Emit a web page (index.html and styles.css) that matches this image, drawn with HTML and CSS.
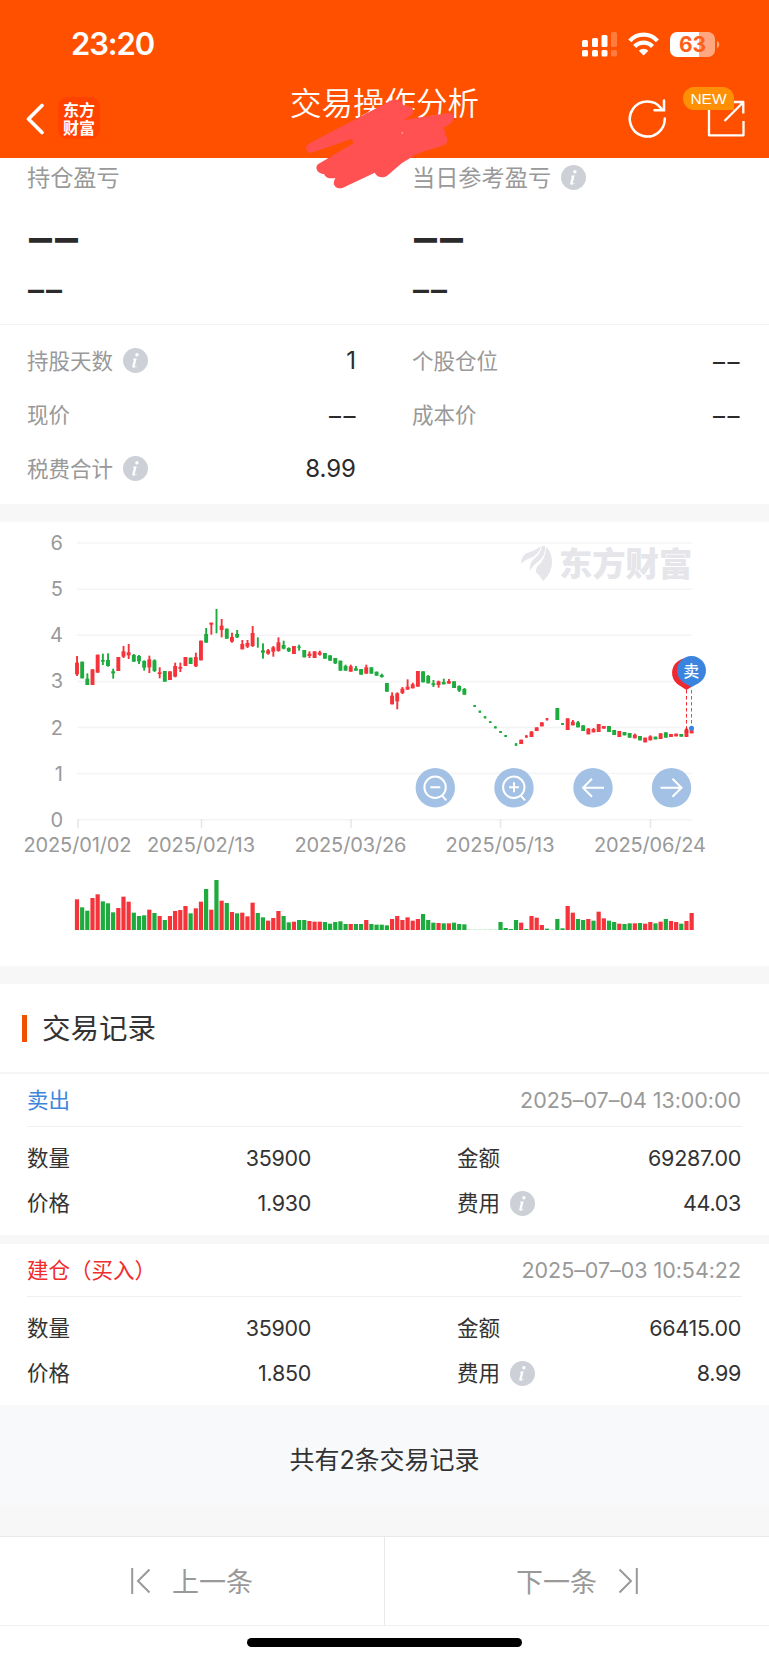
FILE: index.html
```html
<!DOCTYPE html>
<html lang="zh-CN">
<head>
<meta charset="utf-8">
<title>交易操作分析</title>
<link rel="stylesheet" href="styles.css">
</head>
<body>
<svg class="defs" width="0" height="0">
  <symbol id="info" viewBox="0 0 25 25"><circle cx="12.5" cy="12.5" r="12.5" fill="#cdd0d6"/><circle cx="13.9" cy="6.7" r="1.7" fill="#fff"/><path d="M10 10.8l3.7-.5-2 7.6c-.2.9.4.9 1.8-.2l.4.5c-1.700 1.700-5.200 2.300-4.600-.3l1.600-6.100-1-.4z" fill="#fff"/></symbol>
</svg>
<header class="header">
  <div class="status">
    <span class="clock">23:20</span>
    <svg class="status-icons" width="140" height="30" viewBox="0 0 140 30" fill="#fff">
      <rect x="1" y="11" width="6" height="7" rx="1.500"/><rect x="11" y="9" width="6" height="9" rx="1.500"/><rect x="20.500" y="6" width="6" height="12" rx="1.500"/><rect x="30" y="3" width="6" height="15" rx="1.500" opacity=".25"/>
      <rect x="1" y="21" width="6" height="6.500" rx="1.500"/><rect x="11" y="21" width="6" height="6.500" rx="1.500"/><rect x="20.500" y="21" width="6" height="6.500" rx="1.500"/><rect x="30" y="21" width="6" height="6.500" rx="1.500" opacity=".25"/>
      <g fill="none" stroke="#fff" stroke-width="4.200"><path d="M48.800 11.800a18.500 18.500 0 0 1 27.600 0"/><path d="M53.700 17.500a12 12 0 0 1 17.800 0"/></g>
      <path d="M62.600 26.600l-4.800-4.800a6.800 6.800 0 0 1 9.600 0z"/>
      <path d="M96 3h22v25H96a7 7 0 0 1-7-7V10a7 7 0 0 1 7-7z"/>
      <path d="M118 3h9a7 7 0 0 1 7 7v11a7 7 0 0 1-7 7h-9z" opacity=".5"/>
      <path d="M136 12c3 1 3 6 0 7z" opacity=".5"/>
      <text x="111.500" y="23" class="battery" text-anchor="middle">63</text>
    </svg>
  </div>
  <nav class="nav">
    <div class="nav-left">
      <svg width="20" height="32" viewBox="0 0 20 32"><path d="M17 2.500L3.500 16 17 29.500" fill="none" stroke="#fff" stroke-width="3.600" stroke-linecap="round" stroke-linejoin="round"/></svg>
      <div class="logo">东方财富</div>
    </div>
    <h1 class="title">交易操作分析</h1>
    <div class="nav-right">
      <svg class="refresh" width="40" height="40" viewBox="0 0 40 40" fill="none" stroke="#fff" stroke-width="2.500" stroke-linecap="round"><path d="M37.800 20.600A17.500 17.500 0 1 1 34.300 10.500M27.500 12.300H37V2.500"/></svg>
      <div class="share">
        <svg width="38" height="38" viewBox="0 0 38 38" fill="none" stroke="#fff" stroke-width="2.300" stroke-linejoin="round"><path d="M2 9v26.300h34.500V21M17.500 21L36 2.500M27 2h9.300v11.500"/></svg>
        <span class="badge">NEW</span>
      </div>
    </div>
  </nav>
  <svg class="scribble" width="170" height="110" viewBox="0 0 510 330"><path fill="#ff5052" d="M45 159L170 94 285 33C300 25 317 28 325 46C345 46 356 54 355 65C355 75 340 81 325 90L459 69C470 68 477 76 476 86C474 97 458 108 442 114Q452 118 450 135C460 142 459 155 452 163C440 171 380 184 357 197L320 220L279 255C267 266 247 264 239 248L144 293C128 300 113 287 117 275Q118 268 122 265L103 265Q91 262 87 252C67 252 57 231 70 222L177 158 170 147 54 187C34 194 25 168 45 159z"/><circle cx="322" cy="129" r="2.500" fill="#ffc0a0"/></svg>
</header>

<section class="profit">
  <div><p class="label big-label">持仓盈亏</p><p class="dash-xl">––</p><p class="dash-lg">––</p></div>
  <div><p class="label big-label">当日参考盈亏<svg class="info"><use href="#info"/></svg></p><p class="dash-xl">––</p><p class="dash-lg">––</p></div>
</section>
<section class="stats">
  <div class="stat"><span class="label">持股天数<svg class="info"><use href="#info"/></svg></span><b>1</b></div>
  <div class="stat"><span class="label">个股仓位</span><b class="dash">––</b></div>
  <div class="stat"><span class="label">现价</span><b class="dash">––</b></div>
  <div class="stat"><span class="label">成本价</span><b class="dash">––</b></div>
  <div class="stat"><span class="label">税费合计<svg class="info"><use href="#info"/></svg></span><b>8.99</b></div>
</section>
<div class="band"></div>
<section class="chart"><svg id="chart" width="769" height="444" viewBox="0 522 769 444"></svg></section>
<div class="band"></div>

<h2 class="section-title"><i></i><span>交易记录</span></h2>
<article class="record">
  <div class="record-head"><span class="sell">卖出</span><time>2025–07–04 13:00:00</time></div>
  <div class="record-body">
    <div><span>数量</span><b>35900</b></div><div><span>金额</span><b>69287.00</b></div>
    <div><span>价格</span><b>1.930</b></div><div><span>费用<svg class="info"><use href="#info"/></svg></span><b>44.03</b></div>
  </div>
</article>
<div class="band thin"></div>
<article class="record">
  <div class="record-head"><span class="buy">建仓（买入）</span><time>2025–07–03 10:54:22</time></div>
  <div class="record-body">
    <div><span>数量</span><b>35900</b></div><div><span>金额</span><b>66415.00</b></div>
    <div><span>价格</span><b>1.850</b></div><div><span>费用<svg class="info"><use href="#info"/></svg></span><b>8.99</b></div>
  </div>
</article>
<div class="total">共有2条交易记录</div>
<div class="spacer"></div>
<footer class="pager">
  <div class="prev"><svg width="20" height="26" viewBox="0 0 20 26"><path d="M1.200 0v26M18.500 1.500L7 13l11.500 11.500"/></svg><span>上一条</span></div>
  <div class="next"><span>下一条</span><svg width="20" height="26" viewBox="0 0 20 26"><path d="M18.800 0v26M1.500 1.500L13 13 1.500 24.500"/></svg></div>
</footer>
<div class="home"><i></i></div>
<script src="chart.js"></script>
</body>
</html>
```
FILE: styles.css
```css
* { box-sizing: border-box; }
body {
  margin: 0; width: 769px; height: 1662px; overflow: hidden; background: #fff; color: #333;
  font-family: Inter, "Noto Sans CJK SC", sans-serif; font-size: 21.5px; font-weight: 400;
}
p, h1, h2 { margin: 0; font-weight: 400; }
b { font-weight: 400; }
.defs { display: block; }
.header { position: relative; height: 158px; background: #ff5000; color: #fff; }
.status { height: 88px; display: flex; justify-content: space-between; align-items: center; padding: 0 48px 0 71px; }
.clock { font-size: 31px; font-weight: 600; line-height: 88px; letter-spacing: -1.1px; }
.status-icons { display: block; }
.battery { font: 700 21px Inter, sans-serif; fill: #ff5f1a; }
.nav { display: grid; grid-template-columns: 1fr auto 1fr; height: 70px; }
.nav-left { display: flex; gap: 13px; padding: 9px 0 0 25px; align-items: flex-start; }
.nav-left svg { margin-top: 6px; }
.logo {
  width: 42px; height: 42px; padding: 3px 4px 0 5px; border-radius: 9px; background: #ff4200;
  font: 700 16px/18px "Noto Sans CJK SC", sans-serif; word-break: break-all;
}
.title { font-size: 31.5px; line-height: 31px; font-weight: 350; }
.nav-right { display: flex; justify-content: flex-end; gap: 40px; padding: 11px 24px 0 0; }
.refresh { margin-top: -1px; }
.share { position: relative; width: 38px; padding-top: 1px; }
.badge {
  position: absolute; left: -24px; top: -12px; width: 51px; height: 23px; border-radius: 12px 12px 0 12px;
  background: #ff8f05; font: 400 15.500px/24px "Liberation Sans", sans-serif; text-align: center;
}
.scribble { position: absolute; left: 295px; top: 90px; z-index: 2; }
.label { color: #999; }
.info { width: 25px; height: 25px; display: inline-block; vertical-align: middle; margin: -4px 0 0 9.5px; }
.profit { height: 167px; display: grid; grid-template-columns: 385px 1fr; padding-left: 27px; border-bottom: 1.5px solid #f3f3f3; }
.big-label { font-size: 23.2px; line-height: 41px; height: 41px; white-space: nowrap; }
.dash-xl { font-size: 46px; font-weight: 600; height: 78px; line-height: 76px; color: #2b2b2b; letter-spacing: 3px; padding-left: 2px; }
.dash-lg { font-size: 32px; font-weight: 600; height: 24px; line-height: 25px; color: #2b2b2b; letter-spacing: 2px; padding-left: 1px; }
.stats { height: 179px; display: grid; grid-template-columns: 329px 328px; column-gap: 56px; grid-auto-rows: 54px; padding: 9px 0 0 27px; }
.stat { display: flex; justify-content: space-between; align-items: center; }
.stat .label { padding-bottom: 4px; }
.stat b { font-size: 24px; color: #2b2b2b; padding-bottom: 1px; }
.stat .dash { font-size: 24px; letter-spacing: 2.500px; margin-right: -2px; padding-top: 1px; }
.band { height: 18px; background: #f7f7f7; }
.chart { height: 444px; }
.chart svg { display: block; }
.axis { font: 400 20px Inter, sans-serif; fill: #999; }
.watermark { font: 900 33.300px "Noto Sans CJK SC", sans-serif; fill: #e5e5ea; }
.pin { font: 500 16px "Noto Sans CJK SC", sans-serif; fill: #fff; }
.section-title { height: 90px; display: flex; align-items: center; gap: 15px; padding-left: 22px; font-size: 28.500px; border-bottom: 2px solid #f6f6f6; }
.section-title i { width: 5px; height: 27px; background: #f05000; }
.section-title span { padding-bottom: 4px; }
.record { height: 161px; }
.record-head { height: 53px; margin: 0 27px; padding-right: 1px; border-bottom: 1px solid #f0f0f0; display: flex; justify-content: space-between; align-items: center; }
.record-head time { color: #999; letter-spacing: -0.05px; }
.sell { color: #3d86dc; padding-bottom: 4px; }
.buy { color: #f02c2c; padding-bottom: 4px; }
.record-body { display: grid; grid-template-columns: 284px 284px; justify-content: space-between; grid-auto-rows: 45px; padding: 8px 28px 0 27px; }
.record-body div { display: flex; justify-content: space-between; align-items: center; }
.record-body span { padding-bottom: 2px; }
.record-body b { letter-spacing: -0.3px; }
.band.thin { height: 9px; }
.total { height: 100px; padding-top: 5px; background: #f8f9fb; text-align: center; font-size: 25px; line-height: 100px; }
.spacer { height: 31px; background: #f7f7f7; }
.pager { height: 90px; display: grid; grid-template-columns: 385px 384px; border-top: 1px solid #e9e9e9; border-bottom: 1px solid #f0f0f0; font-size: 27px; color: #999; }
.pager div { display: flex; align-items: center; gap: 21px; }
.pager span { padding-bottom: 2px; }
.pager svg { fill: none; stroke: #999; stroke-width: 2; }
.prev { padding-left: 131px; border-right: 1px solid #e9e9e9; }
.next { padding-left: 131px; }
.home { height: 36px; padding-top: 12px; display: flex; justify-content: center; }
.home i { width: 275px; height: 9px; border-radius: 5px; background: #000; }
```
FILE: chart.js
```js
const RED = '#f5333a', GREEN = '#1cab3c';
const X0 = 77, STEP = 5.165;
const out = [];

// Grid and value axis
for (let v = 0; v <= 6; v++) {
  const y = 819.7 - v * 46.100;
  out.push(`<path d="M77 ${y}H692" stroke="#f4f4f4" stroke-width="1.500"/>`);
  out.push(`<text class="axis" x="63" y="${y + 7}" text-anchor="end">${v}</text>`);
}
[[78, '2025/01/02', 108], [201.500, '2025/02/13', 108], [351, '2025/03/26', 112], [500.500, '2025/05/13', 109], [650.500, '2025/06/24', 112]].forEach(([x, t, w]) => {
  out.push(`<path d="M${x} 819v9" stroke="#e6e6e6" stroke-width="1.500"/>`);
  out.push(`<text class="axis" x="${x - 0.500}" y="851.500" text-anchor="middle" textLength="${w}">${t}</text>`);
});

// Watermark
out.push(`<path fill="#e5e5ea" d="M521 564Q521 556 527 553Q535 551 541 546Q540 552 533 557Q524 560 521 564zM530 571Q529 562 535 558Q541 553 542 546L545 546Q546 555 539 561Q532 566 530 571zM543 581L539 575Q534 572 537 567Q546 559 546 547Q552 552 552 562Q552 573 543 581z"/>`);
out.push('<text class="watermark" x="559" y="575.500">东方财富</text>');

// [offset, rows]: each row is index, colour, high, body top, body bottom, low (thirds of a pixel)
const candles = [
  [1770, '0R198,218,253,258 1G215,215,265,265 2G250,266,285,285 3R238,238,285,285 4R194,194,248,248 5G191,210,215,225 6G190,210,228,230 7G236,244,250,266 8R201,201,243,243 9R168,184,200,204 10R162,187,196,207 11G192,195,215,215 12G195,198,214,222 13G211,213,233,242 14R197,208,232,249 15G208,211,243,246 16R232,247,252,265 17G243,243,275,275 18R244,244,270,270 19R218,228,260,262 20R218,231,236,246 21R201,201,228,228 22G203,203,222,222 23R188,201,229,231 24R152,152,211,211 25G114,132,158,158 26R98,98,104,134 27G57,58,58,130 28R87,107,120,142 29G116,116,146,146 30R128,141,155,158 31G120,132,142,144 32R150,162,178,178 33R150,159,170,174 34R108,129,168,171 35G142,147,147,173 36G160,181,188,206 37R177,181,191,194'],
  [1890, '38R48,52,65,80 39R22,37,63,65 40G32,45,56,58 41G52,54,64,66 42R48,48,72,72 43G44,50,53,62 44G60,60,82,82 45R64,71,78,84 46R64,64,84,84 47R62,67,74,77 48G69,69,86,86 49G76,76,92,92 50G84,84,100,102 51G92,92,122,122 52G104,108,122,122 53R104,109,125,125 54G108,115,122,122 55G117,117,134,134 56R104,112,131,131 57G112,112,131,131 58G125,125,137,137 59G131,135,141,143 60G159,159,185,185 61R187,197,223,223 62R187,190,214,238 63R171,176,189,192 64R148,170,179,179 65R158,163,175,175 66R123,123,170,170 67G124,124,157,157 68G135,138,160,160 69G150,160,165,171 70R152,154,165,173 71G146,156,163,163 72R147,153,161,161 73G154,154,174,174 74G166,168,182,186 75G174,177,194,194'],
  [1920, '77G195,195,201,201 78G212,212,218,218 79G229,229,235,235 80G244,244,249,249 81G259,259,265,265 82G273,273,279,279 83G285,285,291,291 85G310,310,317,317 86R299,299,312,312 87R286,286,293,293 88R273,275,291,291 89R262,262,273,273 90R247,247,259,259 91R234,234,241,241 93G204,204,240,240 94G249,249,255,255 95R235,235,270,270 96R240,245,256,256 97G243,247,262,262 98G256,256,273,273 99R264,266,283,283 100R264,267,277,277 101R252,252,276,276 102R258,258,266,266 103G258,258,276,276 104G270,270,285,285 105R273,273,291,291 106G276,276,286,286 107G279,279,293,293 108R281,284,295,295 109G288,288,301,301 110R293,293,307,307 111R286,289,301,301 112G290,290,298,298 113R280,280,297,297 114G277,277,293,293 115R282,282,291,291 116R281,281,289,289 117G282,282,290,290 118R264,276,291,291 119R270,270,280,280']
];
const dots = new Set([77, 78, 79, 80, 81, 82, 83, 85, 87, 91, 94]);
candles.forEach(([base, rows]) => rows.split(' ').forEach(row => {
  const m = row.match(/^(\d+)([RG])(.*)$/);
  const i = +m[1], c = m[2] === 'R' ? RED : GREEN;
  const [h, t, b, l] = m[3].split(',').map(v => (base + +v) / 3);
  const x = X0 + i * STEP, w = dots.has(i) ? 2.600 : 3.900;
  out.push(`<rect x="${x - 0.900}" y="${h}" width="1.900" height="${l - h}" fill="${c}"/>`);
  out.push(`<rect x="${x - w / 2}" y="${t}" width="${w}" height="${b - t}" fill="${c}"/>`);
}));

// Volume: colour and height in thirds of a pixel
('R92 G68 G58 R96 R107 G86 G80 G53 R66 R100 R85 G52 G42 G44 R61 G51 R42 G30 R42 R57 R60 R72 G50 R65 R85 G123 R61 G150 R88 G81 R54 G50 R52 R41 R82 G51 G38 R28 R36 R57 G42 G23 R25 G30 G30 R27 R25 R25 G24 G19 G24 G26 G18 R18 G18 G18 R30 G18 G16 G16 G14 ' +
 'R33 R42 R30 R38 R28 R33 G48 G30 G22 R21 G20 R20 G22 G18 G17 G2 G2 G2 G2 G2 G2 G24 G6 G3 G30 R22 G3 R42 R37 R15 G4 G2 G33 G5 R72 R52 G33 G30 R33 G28 R55 R35 G28 G24 R19 G18 G20 R20 G21 R19 R24 G20 R25 G33 R27 R24 G19 R27 R51')
  .split(' ').forEach((s, i) => {
    const h = +s.slice(1) / 3;
    out.push(`<rect x="${X0 + i * STEP - 2.100}" y="${930 - h}" width="4.200" height="${h}" fill="${s[0] === 'R' ? RED : GREEN}" opacity="${h < 1 ? 0.300 : 1}"/>`);
  });

// Trade markers
out.push(`<g fill="none" stroke-width="1" stroke-dasharray="3.500 2.500"><path d="M686.500 690v40" stroke="#f0282f"/><path d="M691.500 690v37" stroke="#3a84e0"/></g>
<circle cx="686.500" cy="731" r="2.200" fill="#f0282f"/><circle cx="691.500" cy="728.200" r="2.500" fill="#3a84e0"/>
<path fill="#f0282f" d="M686.500 690l-7-4.500a14.500 14.500 0 1 1 14 0z"/>
<path fill="#3a84e0" d="M691.500 687l-7-3.800a14.500 14.500 0 1 1 14 0z"/>
<text class="pin" x="691.300" y="676.500" text-anchor="middle">卖</text>`);

// Zoom and pan controls
const icons = [
  '<circle cx="-.2" cy="-.5" r="10.700"/><path d="M-5-.5H5M7 8l4 4.500"/>',
  '<circle cx="-.2" cy="-.5" r="10.700"/><path d="M-5-.5H5M0-5.500v10M7 8l4 4.500"/>',
  '<path d="M11 0H-10M-1-9l-9 9 9 9"/>',
  '<path d="M-11 0H10M1-9l9 9-9 9"/>'
];
[435.300, 514, 593, 671.500].forEach((x, i) => {
  out.push(`<g transform="translate(${x} 787.800)"><circle r="19.700" fill="#a3c1e5"/><g fill="none" stroke="#fff" stroke-width="2">${icons[i]}</g></g>`);
});
document.getElementById('chart').innerHTML = out.join('');
```
